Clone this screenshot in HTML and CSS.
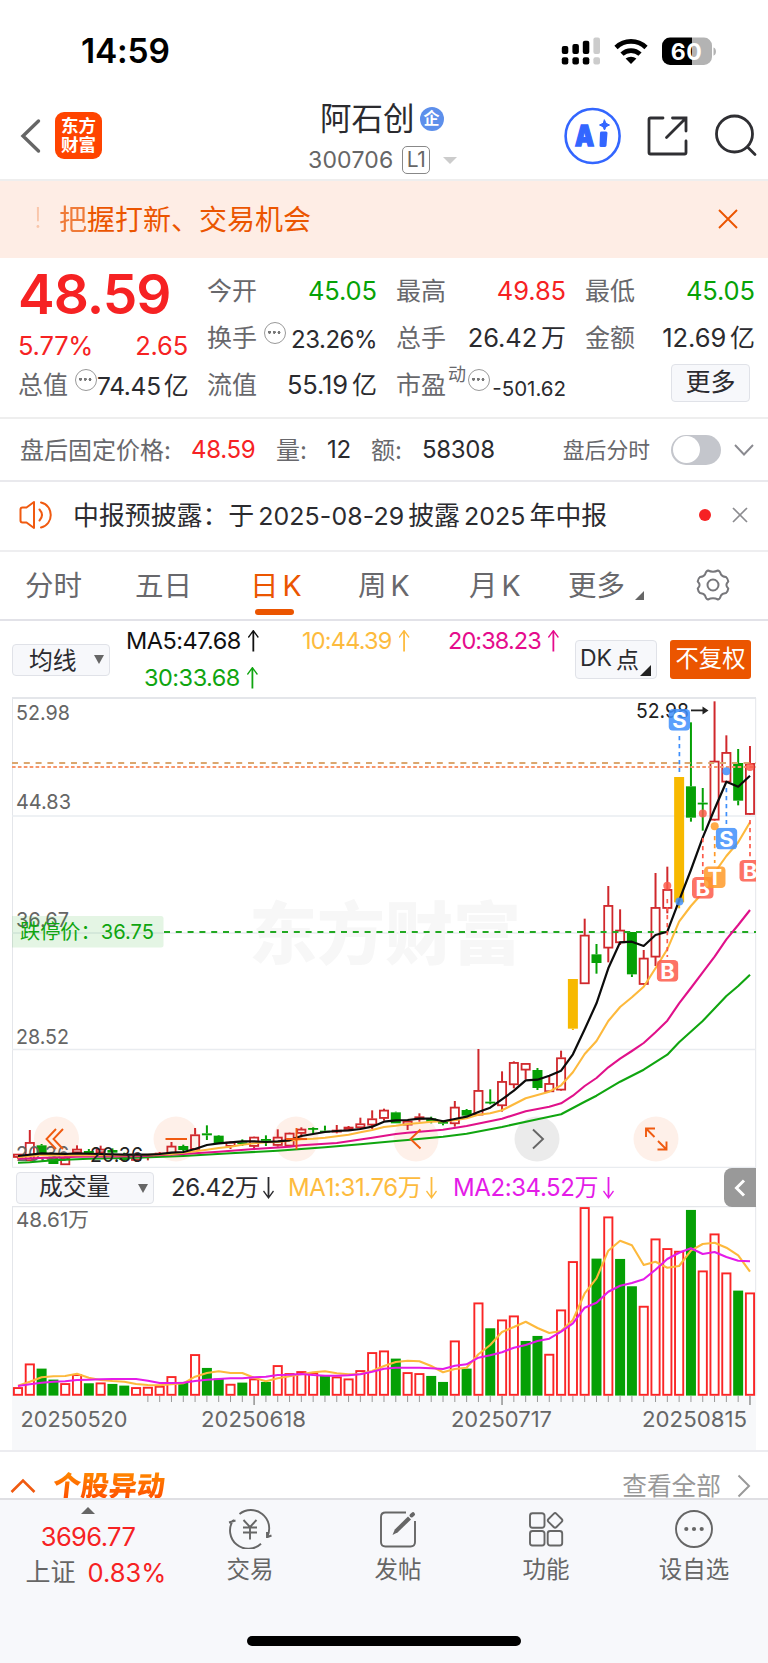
FILE: index.html
```html
<!DOCTYPE html>
<html lang="zh-CN">
<head>
<meta charset="utf-8">
<title>阿石创 300706</title>
<link rel="stylesheet" href="styles.css">
</head>
<body>
<header class="status">
  <span class="clock">14:59</span>
  <svg class="status-icons" width="156" height="30" viewBox="561 37 156 30">
    <g fill="#000">
      <rect x="561.8" y="46" width="6.5" height="8" rx="2"/><rect x="572.4" y="44" width="6.5" height="10" rx="2"/><rect x="582.8" y="40.7" width="6.5" height="13.3" rx="2"/>
      <rect x="561.8" y="57.3" width="6.5" height="7.3" rx="2"/><rect x="572.4" y="57.3" width="6.5" height="7.3" rx="2"/><rect x="582.8" y="57.3" width="6.5" height="7.3" rx="2"/>
    </g>
    <g fill="#ccc"><rect x="593.4" y="37.6" width="6.6" height="16.4" rx="2"/><rect x="593.4" y="57.3" width="6.6" height="7.3" rx="2"/></g>
    <g fill="none" stroke="#000" stroke-width="4.6"><path d="M616 47.5a21.5 21.5 0 0 1 30 0"/><path d="M622 54.2a13 13 0 0 1 18 0"/></g>
    <path d="M625.6 58.6a8.4 8.4 0 0 1 10.8 0L631 64z"/>
    <path d="M692 37.6h-22a8 8 0 0 0-8 8v11.3a8 8 0 0 0 8 8h22z"/>
    <path fill="#b3b3b3" d="M692 37.6h12a8 8 0 0 1 8 8v11.3a8 8 0 0 1-8 8h-12zM713.5 47.5c3.3 1 3.3 7.200 0 8.200z"/>
    <text class="batt" x="686.300" y="59.800" text-anchor="middle" textLength="31">60</text>
  </svg>
</header>

<nav class="titlebar">
  <svg class="back" width="22" height="36" viewBox="0 0 22 36"><path d="M19.500 3L4 18l15.500 15" fill="none" stroke="#666" stroke-width="3.400" stroke-linecap="round"/></svg>
  <div class="logo"><span>东方</span><span>财富</span></div>
  <div class="stock">
    <div class="stock-name">阿石创<span class="ent">企</span></div>
    <div class="stock-code"><span>300706</span><span class="level">L1</span><i class="tri-down"></i></div>
  </div>
  <svg class="nav-icons" width="206" height="60" viewBox="562 106 206 60" fill="none" stroke="#2f2f33" stroke-width="2.800" stroke-linecap="round">
    <circle cx="592.600" cy="136" r="27" stroke="#3366ff" stroke-width="2.600"/>
    <text class="ai" x="575" y="146" textLength="19" lengthAdjust="spacingAndGlyphs">A</text>
    <path d="M601.500 133h4.500l-1 12.500h-4z" fill="#3366ff" stroke="#3366ff" stroke-width="3" stroke-linejoin="round"/>
    <path d="M604.500 120l1.500 3.300 3.500 1.700-3.500 1.700-1.500 3.300-1.500-3.300-3.500-1.700 3.500-1.700z" fill="#3366ff" stroke="#3366ff" stroke-width="1"/>
    <path d="M663 118h-12.500q-1.500 0-1.500 1.500v33q0 1.500 1.500 1.500h34q1.500 0 1.500-1.500V141M672.500 118H686v13M685.500 118.500L666.500 137.500"/>
    <circle cx="734.500" cy="134" r="18"/><path d="M747.500 147l7.500 7.500"/>
  </svg>
</nav>

<section class="banner">
  <span class="bang">!</span><span class="banner-text"><em>把</em>握打新、交易机会</span>
  <svg width="22" height="22" viewBox="0 0 22 22"><path d="M2 2l18 18M20 2L2 20" stroke="#eb5500" stroke-width="1.900"/></svg>
</section>

<section class="quote">
  <div class="col">
    <div class="price">48.59</div>
    <div class="pct"><span>5.77%</span><span>2.65</span></div>
    <div class="cell low"><label>总值</label><i class="dots"></i><b class="s24">74.45<u>亿</u></b></div>
  </div>
  <div class="col">
    <div class="cell"><label>今开</label><b class="green">45.05</b></div>
    <div class="cell"><label>换手</label><i class="dots"></i><b class="s235">23.26%</b></div>
    <div class="cell"><label>流值</label><b>55.19<u>亿</u></b></div>
  </div>
  <div class="col">
    <div class="cell"><label>最高</label><b class="red">49.85</b></div>
    <div class="cell"><label>总手</label><b>26.42<u>万</u></b></div>
    <div class="cell"><label>市盈</label><sup>动</sup><i class="dots"></i><b class="s20">-501.62</b></div>
  </div>
  <div class="col">
    <div class="cell"><label>最低</label><b class="green">45.05</b></div>
    <div class="cell"><label>金额</label><b>12.69<u>亿</u></b></div>
    <div class="cell end"><button class="more">更多</button></div>
  </div>
</section>

<section class="after">
  <span class="w173">盘后固定价格:</span><b class="red w85">48.59</b><span class="w51">量:</span><b class="w44">12</b><span class="w51b">额:</span><b>58308</b>
  <span class="after-time">盘后分时</span><i class="toggle"></i>
  <svg width="20" height="12" viewBox="0 0 20 12"><path d="M1 1l9 9.500L19 1" fill="none" stroke="#8a8a90" stroke-width="1.900"/></svg>
</section>

<section class="notice">
  <svg width="34" height="30" viewBox="0 0 34 30" fill="none" stroke="#f05a10" stroke-width="2" stroke-linejoin="round" stroke-linecap="round"><path d="M15 2L7.500 7.500H3.500Q1.500 7.500 1.500 9.500v11q0 2 2 2h4L15 28z"/><path d="M20.500 9.500q5 5.500 0 11M22 2.500c13 3 13 22 0 25"/></svg>
  <p>中报预披露：于<b>2025-08-29</b>披露<b>2025</b>年中报</p>
  <i class="reddot"></i>
  <svg width="16" height="16" viewBox="0 0 16 16"><path d="M1 1l14 14M15 1L1 15" stroke="#8c8c90" stroke-width="1.700"/></svg>
</section>

<nav class="tabs">
  <span class="t1">分时</span><span class="t2">五日</span><span class="t3 on">日<b>K</b></span><span class="t4">周<b>K</b></span><span class="t5">月<b>K</b></span><span class="t6">更多<i class="corner"></i></span>
  <svg width="34" height="34" viewBox="-17 -17 34 34" fill="none" stroke="#77777b" stroke-width="2" stroke-linejoin="round"><path d="M-5-14.500Q0-12 5-14.500 7-14 8-10.500 9-8.500 13-8 14.800-6.500 15.300-3.500 11.500 0 15.300 3.500 14.800 6.500 13 8 9 8.500 8 10.500 7 14 5 14.500 0 12-5 14.500-7 14-8 10.500-9 8.500-13 8-14.800 6.500-15.300 3.500-11.500 0-15.300-3.500-14.800-6.500-13-8-9-8.500-8-10.500-7-14-5-14.500z"/><circle r="5.500"/></svg>
</nav>

<section class="ma">
  <div class="picker"><span>均线</span><i class="tri"></i></div>
  <div class="ma-values">
    <div class="ma-line"><span class="m5">MA5:47.68<i class="up"></i></span><span class="m10">10:44.39<i class="up"></i></span><span class="m20">20:38.23<i class="up"></i></span></div>
    <div class="ma-line second"><span class="m30">30:33.68<i class="up"></i></span></div>
  </div>
  <div class="dk"><span>DK</span><span>点</span><i class="corner"></i></div>
  <div class="fq">不复权</div>
</section>

<svg id="kline" width="768" height="471" viewBox="0 697 768 471"></svg>

<section class="volhead">
  <div class="picker wide"><span>成交量</span><i class="tri"></i></div>
  <span class="v0">26.42万<i class="down"></i></span>
  <span class="v1">MA1:31.76万<i class="down"></i></span>
  <span class="v2">MA2:34.52万<i class="down"></i></span>
  <div class="collapse"><svg width="12" height="18" viewBox="0 0 12 18"><path d="M10 1.500L2.500 9l7.500 7.500" fill="none" stroke="#fff" stroke-width="3"/></svg></div>
</section>

<svg id="volume" width="768" height="244" viewBox="0 1206 768 244"></svg>

<section class="moves">
  <svg width="26" height="16" viewBox="0 0 26 16"><path d="M1.500 14L13 2.500 24.500 14" fill="none" stroke="#f05a10" stroke-width="2.600"/></svg>
  <h2>个股异动</h2>
  <span>查看全部</span>
  <svg width="14" height="24" viewBox="0 0 14 24"><path d="M1.500 1.500L12 12 1.500 22.500" fill="none" stroke="#999" stroke-width="2"/></svg>
</section>

<footer class="bottom">
  <div class="index"><i class="tri-up"></i><div class="red idx">3696.77</div><div class="idx2"><span>上证</span><b class="red">0.83%</b></div></div>
  <div class="item"><svg width="44" height="40" viewBox="-22 -20 44 40" fill="none" stroke="#666" stroke-width="1.900"><path d="M-10.500-15A18.300 18.300 0 0 1 17.500 7M11 14.700A18.300 18.300 0 0 1-17-8.500M-21-6.500l6.500-2M-17-8.500l1-.500M17.500 8l4-1.500M17 3v6"/><path d="M-6.500-9L0-2l6.500-7M0-2V10.500M-7-1.500H7M-7 3.500H7"/></svg><span>交易</span></div>
  <div class="item"><svg width="44" height="40" viewBox="-22 -20 44 40" fill="none" stroke="#666" stroke-width="1.900"><path d="M8-16.500H-12.500Q-17-16.500-17-12V13Q-17 17.500-12.500 17.500H12.500Q17 17.500 17 13V-8"/><path d="M-5.500 6l2.300-5.500L10-12.500l3 3L-.200 3.200z" fill="#666" stroke="none"/><path d="M13.500-13.500l1.500-1.300" stroke-width="4" stroke-linecap="round"/></svg><span>发帖</span></div>
  <div class="item"><svg width="44" height="40" viewBox="-22 -20 44 40" fill="none" stroke="#666" stroke-width="1.900"><rect x="-16" y="-15.700" width="14.500" height="14.500" rx="2.500"/><rect x="-16" y="2" width="14.500" height="14.500" rx="2.500"/><rect x="1.700" y="2" width="14.500" height="14.500" rx="2.500"/><rect x="3.400" y="-14.300" width="11.300" height="11.300" rx="2" transform="rotate(45 9 -8.600)"/></svg><span>功能</span></div>
  <div class="item"><svg width="44" height="40" viewBox="-22 -20 44 40" fill="none" stroke="#666" stroke-width="1.900"><circle r="18"/><g fill="#666" stroke="none"><circle cx="-7.700" r="2.100"/><circle r="2.100"/><circle cx="7.700" r="2.100"/></g></svg><span>设自选</span></div>
  <i class="home"></i>
</footer>
<script src="chart.js"></script>
</body>
</html>
```
FILE: styles.css
```css
* { box-sizing: border-box; }
body { margin: 0; width: 768px; background: #fff; color: #2b2b2f; font-family: Inter, "Noto Sans CJK SC", sans-serif; overflow: hidden; }
b, i, em, u { font-weight: 400; font-style: normal; text-decoration: none; }
svg { display: block; flex: none; }
span, b, p, h2, label, div { white-space: nowrap; }
.red { color: #f62223; }
.green { color: #06a206; }

.status { height: 91px; display: flex; justify-content: space-between; padding: 37px 51px 0 81px; }
.clock { font-size: 33.5px; font-weight: 600; line-height: 29px; letter-spacing: -0.2px; color: #000; }
.batt { font-size: 23px; font-weight: 700; fill: #fff; }

.titlebar { height: 90px; border-bottom: 2px solid #eee; display: flex; align-items: flex-start; padding-left: 19px; }
.back { margin-top: 27px; }
.logo { width: 47px; height: 47px; margin: 21px 0 0 14px; padding-top: 4px; border-radius: 9px; background: #ff4400; color: #fff; font-size: 17.5px; font-weight: 700; line-height: 19px; display: flex; flex-direction: column; align-items: center; }
.stock { width: 280px; margin-left: 206px; padding-top: 10px; }
.stock-name { height: 36px; line-height: 36px; padding-left: 12px; font-size: 31.5px; display: flex; align-items: center; }
.ent { width: 24px; height: 24px; margin-left: 5px; border-radius: 50%; background: #5d8feb; color: #fff; font-size: 16px; font-weight: 700; line-height: 22px; text-align: center; }
.stock-code { display: flex; align-items: center; height: 28px; margin-top: 9px; color: #666; font-size: 23px; }
.stock-code span:first-child { width: 94px; letter-spacing: 0.2px; }
.level { width: 28px; height: 28px; border: 1.5px solid #888; border-radius: 5px; font-size: 21px; line-height: 26px; text-align: center; letter-spacing: -0.5px; }
.tri-down { margin-left: 13px; border: 7px solid transparent; border-top: 7px solid #ccc; border-bottom: 0; }
.nav-icons { margin: 15px 0 0 -26px; }
.ai { font: 900 29px Inter, sans-serif; fill: #3366ff; stroke: #3366ff; stroke-width: 1.5px; }

.banner { height: 77px; background: #feede5; color: #eb5500; display: flex; align-items: center; padding: 0 29px 4px 34px; font-size: 28px; }
.banner svg { margin-top: 2px; }
.bang { width: 25px; opacity: .25; font-weight: 300; }
.banner-text { flex: 1; }
.banner em { opacity: .75; }

.quote { height: 161px; border-bottom: 2px solid #eee; display: grid; grid-template-columns: repeat(4, 170px); column-gap: 19px; padding: 9px 0 0 18px; }
.col { min-width: 0; }
.price { height: 54px; line-height: 54px; font-size: 55px; font-weight: 600; color: #f62223; letter-spacing: -1px; }
.pct { height: 49px; line-height: 49px; display: flex; justify-content: space-between; font-size: 25.5px; color: #f62223; letter-spacing: -0.2px; }
.cell { height: 47px; display: flex; align-items: center; font-size: 25px; }
.cell.low { height: 30px; }
.cell label { color: #68686c; margin-top: -4px; }
.cell b { margin-left: auto; font-size: 25.5px; letter-spacing: -0.1px; }
.cell u { margin-left: 4px; font-size: 25px; line-height: 1; }
.cell .s24 { font-size: 24.5px; padding-top: 2px; letter-spacing: -0.3px; }
.cell .s24 u { margin-left: 3px; }
.cell .s235 { font-size: 24px; padding-top: 3px; letter-spacing: -0.5px; }
.cell .s20 { font-size: 20.5px; padding-top: 8px; letter-spacing: 0; }
.cell sup { font-size: 18px; line-height: 18px; margin: -20px 0 0 2px; color: #68686c; }
.dots { width: 22px; height: 22px; margin: -10px 0 0 7px; border: 1.7px solid #999; border-radius: 50%; background: radial-gradient(circle at 4.5px 9.3px, #777 1.3px, transparent 1.7px), radial-gradient(circle at 9.3px 9.3px, #777 1.3px, transparent 1.7px), radial-gradient(circle at 14px 9.3px, #777 1.3px, transparent 1.7px); flex: none; }
sup + .dots { margin-left: 2px; margin-top: -10px; }
.cell.end { justify-content: flex-end; padding: 0 5px 4px 0; }
.more { width: 79px; height: 38px; border: 1.5px solid #e0e2e8; border-radius: 4px; background: #f7f8fb; color: #2b2b2f; font: 25px/32px Inter, "Noto Sans CJK SC", sans-serif; padding: 0 0 2px; }

.after { height: 63px; border-bottom: 2px solid #e9e9ed; display: flex; align-items: center; padding: 0 14px 0 20px; font-size: 24px; }
.after span { color: #68686c; margin-top: -2px; }
.after b { letter-spacing: -0.3px; }
.w173 { width: 171px; }
.w85 { width: 85px; }
.w51, .w51b { width: 51px; }
.w44 { width: 44px; }
.after .after-time { margin-left: auto; font-size: 21.8px; }
.toggle { width: 50px; height: 30px; margin: 0 13px 0 21px; border-radius: 15px; background: #c4c6cc; display: flex; align-items: center; padding-left: 1.500px; }
.toggle::before { content: ""; width: 27px; height: 27px; border-radius: 50%; background: #fff; }

.notice { height: 70px; border-bottom: 2px solid #eeeef0; display: flex; align-items: center; padding: 0 20px 2px 19px; }
.notice p { margin: -4px auto 0 20px; font-size: 25.900px; }
.notice p b { margin: 0 4px; letter-spacing: 0.1px; font-size: 24.900px; }
.reddot { width: 12px; height: 12px; border-radius: 50%; background: #f62223; margin-right: 21px; }

.tabs { height: 69px; border-bottom: 2px solid #e2e2e8; display: flex; align-items: center; padding: 0 0 1px 25px; font-size: 28.500px; color: #68686c; }
.tabs span { padding-bottom: 4px; }
.tabs b { margin-left: 4px; }
.t1 { width: 110px; } .t2 { width: 115px; } .t3 { width: 108px; } .t4 { width: 111px; } .t5 { width: 99px; } .t6 { width: 128px; display: flex; align-items: flex-end; }
.tabs .on { color: #eb5500; position: relative; }
.on::after { content: ""; position: absolute; left: 5px; bottom: -7px; width: 39px; height: 6px; border-radius: 3px; background: #eb5500; }
.corner { width: 0; height: 0; border-left: 9px solid transparent; border-bottom: 9px solid #666; margin: 0 0 4px 10px; }

.ma { height: 76px; display: flex; padding-left: 12px; }
.picker { width: 98px; height: 32px; margin-top: 22.500px; border: 1.500px solid #e0e2e8; border-radius: 4px; background: #f7f8fb; display: flex; align-items: center; justify-content: space-between; padding: 0 5px 0 16px; font-size: 23.800px; }
.picker span { margin-top: -3px; }
.tri { border: 5px solid transparent; border-top: 9px solid #666; border-bottom: 0; }
.ma-values { width: 465px; padding-top: 1px; }
.ma-line { height: 37px; display: flex; align-items: center; padding-left: 16px; font-size: 23.500px; letter-spacing: -0.5px; }
.second { padding-left: 34px; }
.ma-line span { display: flex; align-items: center; }
.m5 { color: #111; width: 176px; } .m10 { color: #fdbb3e; width: 146px; letter-spacing: -0.8px; } .m20 { color: #e50c8c; letter-spacing: -0.9px; } .m30 { color: #10a510; }
.up, .down { width: 11px; height: 22px; margin-left: 7px; background: currentColor; clip-path: polygon(4.600px 3.500px, 1px 8.500px, 0 7.500px, 5.500px 0, 11px 7.500px, 10px 8.500px, 6.400px 3.500px, 6.400px 22px, 4.600px 22px); flex: none; }
.down { transform: rotate(180deg); }
.dk { width: 82px; height: 39px; margin-top: 18.500px; border: 1.500px solid #e0e2e8; border-radius: 4px; background: #f7f8fb; font-size: 23px; display: flex; align-items: center; padding-left: 4px; }
.dk span { margin: -2px 4px 0 0; }
.dk .corner { border-left-width: 11px; border-bottom: 11px solid #222; margin: 23px 0 0 -3px; }
.fq { width: 81px; height: 39px; margin: 18.500px 0 0 13px; border-radius: 3px; background: #eb5500; color: #fff; font-size: 23.300px; line-height: 37px; text-align: center; }

.volhead { height: 38px; display: flex; align-items: flex-start; padding-left: 16px; font-size: 24px; line-height: 38px; }
.wide { width: 138px; margin-top: 4px; padding: 0 5px 0 22px; }
.volhead span { display: flex; align-items: center; }
.volhead > span { margin-top: 1px; letter-spacing: -0.400px; }
.v0 { margin-left: 17px; width: 117px; } .v1 { color: #fdbb3e; width: 165px; } .v2 { color: #e41be8; }
.v0 .down { margin-left: 5px; } .v1 .down, .v2 .down { margin-left: 5px; }
.collapse { width: 32px; height: 39px; margin-left: auto; margin-right: 12px; border-radius: 8px 0 0 8px; background: #999; display: flex; align-items: center; justify-content: center; position: relative; }

.moves { height: 48px; border-top: 2px solid #ececf0; display: flex; align-items: center; padding: 22px 17px 0 10px; }
.moves h2 { margin: 0 auto 0 17px; font-size: 28px; line-height: 30px; font-weight: 900; transform: skewX(-6deg); background: linear-gradient(#ff8a00, #ff4a00); -webkit-background-clip: text; color: transparent; }
.moves span { font-size: 24.700px; line-height: 30px; color: #999; margin-right: 16px; }

.bottom { height: 166px; background: #f7f8fb; border-top: 2px solid #dfdfe3; display: grid; grid-template-columns: 176px 148px 148px 148px 148px; position: relative; color: #666; }
.index { display: flex; flex-direction: column; align-items: center; }
.tri-up { margin-top: 7px; border: 7px solid transparent; border-bottom: 7px solid #666; border-top: 0; }
.idx { margin-top: 6px; font-size: 25.500px; line-height: 34px; letter-spacing: -0.600px; }
.idx2 { display: flex; gap: 12px; align-items: center; margin: 1px 0 0 16px; font-size: 25px; line-height: 36px; }
.idx2 span { margin-top: -2px; }
.idx2 b { font-size: 25.500px; }
.item { display: flex; flex-direction: column; align-items: center; padding-top: 9px; font-size: 23.500px; }
.item span { line-height: 34px; margin-top: 4px; }
.home { position: absolute; left: 247px; top: 136px; width: 274px; height: 10px; border-radius: 5px; background: #000; }

svg text { font-family: Inter, "Noto Sans CJK SC", sans-serif; }
.axis { font-size: 20.500px; fill: #666; }
.mark { font-weight: 700; font-size: 22px; fill: #fff; }
.wm { font-weight: 900; font-size: 68px; fill: #f7f7f7; }
```
FILE: chart.js
```js
const NS = 'http://www.w3.org/2000/svg';
const xAt = i => 18 + i * 11.806;
function add(parent, tag, attrs, text) {
  const e = document.createElementNS(NS, tag);
  for (const k in attrs) e.setAttribute(k, attrs[k]);
  if (text) e.textContent = text;
  parent.appendChild(e);
  return e;
}
const line = (p, x1, y1, x2, y2, stroke, w, dash) =>
  add(p, 'path', { d: `M${x1} ${y1}L${x2} ${y2}`, stroke, 'stroke-width': w, fill: 'none', ...(dash ? { 'stroke-dasharray': dash } : {}) });
const label = (p, x, y, w, t, extra) =>
  add(p, 'text', { x: x - 1, y, textLength: w + 1, lengthAdjust: 'spacingAndGlyphs', class: 'axis', ...extra }, t);

const k = document.getElementById('kline');
line(k, 12, 698, 756, 698, '#e4e6ea', 1.8);
line(k, 12.5, 698, 12.5, 1168, '#e4e6ea', 1);
line(k, 755.7, 698, 755.7, 1168, '#e4e6ea', 1);
[816, 933, 1049.5, 1167.5].forEach(y => line(k, 12, y, 756, y, '#e9ecf0', 1.5));
add(k, 'text', { x: 249, y: 959, textLength: 272, class: 'wm' }, '东方财富');
[56.5, 176, 296, 416, 537, 656].forEach((x, i) =>
  add(k, 'circle', { cx: x, cy: 1139, r: 22.5, fill: i === 4 ? '#ebebeb' : '#fef0e9' }));

// Candles: scale segments map [high, top, bottom, low] thirds onto the panel.
const segA = [
  'r 222 222 232 236', 'r 150 187 242 243', 'g 192 196 222 225', 'g 225 230 252 252', 'r 225 235 254 254',
  'r 196 207 218 222', 'g 207 213 221 225', 'r 197 207 218 225', 'g 205 210 218 222', 'g 218 224 240 242',
  'r 218 226 241 245', 'r 222 226 232 241', 'r 216 219 227 230', 'r 186 198 222 226', 'g 194 198 210 214',
  'r 144 164 208 210', 'g 136 160 166 180', 'g 165 167 192 192', 'r 184 186 199 207', 'g 178 187 190 198',
  'r 170 171 199 208', 'g 166 177 181 198', 'r 148 171 196 200', 'r 158 159 198 200', 'r 142 147 160 172',
  'g 142 144 146 160', 'g 137 152 155 158', 'r 135 150 156 160', 'r 138 141 148 150', 'r 113 131 143 147',
  'r 91 116 135 147', 'r 86 90 115 122', 'g 95 97 130 130'];
const segB = [
  'r 540 543 555 570', 'r 520 530 537 545', 'g 530 535 545 550', 'g 540 545 551 556', 'r 483 501 551 560',
  'g 507 510 527 530', 'r 327 451 525 527', 'g 448 485 489 493', 'r 394 424 497 515', 'r 364 367 434 445',
  'r 369 370 390 418', 'g 384 390 444 450', 'r 407 430 455 456', 'r 332 353 450 452', 'y 117 117 266 270',
  'r -64 -15 131 131', 'g 12 43 69 101', 'r -162 -104 24 67', 'r -92 -30 8 15', 'g -24 -24 103 111',
  'r 30 54 133 135', 'r -201 -98 51 78'];
const segC = [
  'r 530 598 655 670', 'y 261 261 637 655', 'g 97 289 383 395', 'g 294 338 341 422', 'r 34 213 390 392',
  'r 136 187 276 276', 'g 177 219 332 346', 'r 168 220 373 375'];
const COL = { r: '#d0282c', g: '#05a005', y: '#f7b900' };
let idx = 0;
for (const [seg, base] of [[segA, 1080], [segB, 940], [segC, 690]]) {
  for (const s of seg) {
    const [c, ...v] = s.split(' ');
    const [h, t, b, l] = v.map(n => base + n / 3);
    const x = xAt(idx++), col = COL[c];
    if (h < t) line(k, x, h, x, t, col, 2);
    if (l > b) line(k, x, b, x, l, col, 2);
    if (c === 'r') add(k, 'rect', { x: x - 4.1, y: t + .6, width: 8.2, height: Math.max(b - t - 1, .8), fill: 'none', stroke: col, 'stroke-width': 1.8 });
    else add(k, 'rect', { x: x - 5, y: t, width: 10, height: Math.max(b - t, 1.8), fill: col });
  }
}

// Limit-down and reference price lines.
label(k, 17, 927, 52, '36.67');
label(k, 17, 1161, 52, '20.36');
add(k, 'path', { d: 'M12 916H161q2.500 0 2.500 2.500V945q0 2.500-2.500 2.500H12z', fill: '#05a005', 'fill-opacity': .11 });
label(k, 21, 939, 133, '跌停价：36.75', { style: 'fill:#10a510' });
line(k, 164, 932, 756, 932, '#22a822', 2.2, '6 5.8');
line(k, 12, 763, 756, 763, '#dba76f', 2.2, '6 5.8');
line(k, 12, 767, 756, 767, '#f6966b', 2.2, '3.6 2.3');

// Moving averages as index:value pairs on each scale segment.
function curve(svg, color, parts, w = 2.1) {
  const d = parts.flatMap(([base, s]) => s.split(' ').map(p => {
    const [i, v] = p.split(':').map(Number);
    return `${xAt(i).toFixed(1)} ${(base + v / 3).toFixed(1)}`;
  }));
  add(svg, 'path', { d: 'M' + d.join('L'), fill: 'none', stroke: color, 'stroke-width': w, 'stroke-linejoin': 'round' });
}
curve(k, '#10a510', [[1080, '0:248 1:247 3:241 6:236 10:233 14:228 18:220 22:212 26:202 29:193 32:183'],
  [940, '33:600 36:590 38:581 41:561 44:538 46:523 48:485 49:467 50:446 51:425 53:389 55:344 56:307 58:243 60:168 61:138 62:104']]);
curve(k, '#e0118a', [[1080, '0:236 5:230 10:229 14:222 17:215 20:207 23:200 24:196 27:189 30:173 32:162'],
  [940, '33:578 36:569 38:558 41:536 43:514 45:500 46:490 47:467 48:438 49:414 50:382 51:356 52:333 53:309 54:277 55:242 56:190 57:144 58:97 59:50 60:-2'],
  [690, '61:705 62:660']]);
curve(k, '#fdb93c', [[1080, '0:232 2:225 5:226 10:226 13:222 14:218 15:214 16:209 17:204 18:200 19:194 20:190 21:187 22:186 23:182 24:178 25:176 26:173 27:169 28:164 29:157 30:150 31:141 32:137'],
  [940, '33:552 34:549 35:545 36:544 37:541 38:535 39:524 40:520 41:511 42:493 43:475 44:465 45:455 46:436 47:397 48:342 49:303 50:243 51:201 52:172 53:140 54:85'],
  [690, '55:778 56:695 57:648 58:608 59:548 60:498 61:457 62:397']]);
curve(k, '#0c0c0c', [[1080, '0:228 2:220 4:222 5:220 7:222 9:224 11:224 12:222 13:218 14:216 15:207 16:195 17:190 18:187 19:184 20:184 21:186 22:184 23:181 24:168 25:162 26:156 27:153 28:151 29:147 30:140 31:125 32:121'],
  [940, '33:540 34:536 35:536 36:544 37:537 38:530 39:516 40:503 41:478 42:452 43:421 44:419 45:407 46:392 47:343 48:268 49:190 50:85 51:7'],
  [690, '52:755 53:768 54:735 55:725 56:632 57:540 58:443 59:357 60:275 61:290 62:257']], 2.2);

label(k, 17, 720, 53, '52.98');
label(k, 17, 809, 54, '44.83');
label(k, 17, 1044, 52, '28.52');
label(k, 91, 1162, 52, '20.36', { style: 'fill:#222' });
label(k, 637, 717.5, 52, '52.98', { style: 'fill:#222' });
line(k, 691, 710.4, 703, 710.4, '#222', 1.8);
add(k, 'path', { d: 'M702.500 706.500L708.500 710.400 702.500 714.500z', fill: '#222' });

// Trade markers: letter, box x/y, dash from/to, dot y, centre x.
const R = '#fd5b4a', BL = '#3f8ffb', O = '#ff9a28';
[['B', 656.7, 960, 899, 957, 885.7, 667.3, R], ['S', 668.5, 709, 736, 772, 901.5, 679.4, BL],
 ['B', 692, 877, 838, 874, 813.5, 702.8, R], ['T', 704, 866.3, 836, 863, 826.2, 714.7, O],
 ['S', 715.7, 827.8, 788, 824, 771.2, 726.4, BL], ['B', 739.3, 860, 820, 857, 767, 750, R]].forEach(([t, x, y, a, b, dot, cx, c]) => {
  line(k, cx, a, cx, b, c, 1.7, '4.2 3.8');
  add(k, 'circle', { cx, cy: dot, r: 4, fill: c, 'fill-opacity': .85 });
  const g = add(k, 'svg', { x, y, width: Math.min(21.7, 756 - x), height: 21.7 });
  add(g, 'rect', { width: 21.7, height: 21.7, rx: 4.5, fill: c, 'fill-opacity': .85 });
  add(g, 'text', { x: 10.85, y: 18.8, 'text-anchor': 'middle', class: 'mark' }, t);
});

const icon = (d, c) => add(k, 'path', { d, stroke: c, 'stroke-width': 1.9, fill: 'none' });
icon('M56 1129L46.500 1139L56 1149M63 1129L53.500 1139L63 1149M165.500 1139H187M286 1139H307M296.500 1128V1149.500M420.500 1129.500L410.500 1139L420.500 1148.500', '#f05a10');
icon('M533 1129.500L543 1139L533 1148.500', '#666');
icon('M646 1137V1128.500H655M646.500 1129L654.500 1137M666.500 1141.500V1149.500H657.500M666 1149L658 1141', '#f05a10');

// Volume panel
const v = document.getElementById('volume');
add(v, 'rect', { x: 12, y: 1396, width: 744, height: 55, fill: '#f7f8fa' });
line(v, 12, 1206.6, 756, 1206.6, '#e4e6ea', 1.2);
line(v, 12.5, 1206, 12.5, 1396, '#e4e6ea', 1);
line(v, 755.7, 1206, 755.7, 1396, '#e4e6ea', 1);
const tops = [668, 597, 612, 645, 656, 629, 656, 654, 658, 663, 668, 667, 664, 635, 652, 569, 610, 642, 658, 654, 642, 652, 602, 626, 620, 624, 634, 636, 642, 617, 563, 558, 582,
  623, 626, 634, 652, 528, 612, 414, 491, 465, 453, 529, 514, 568, 435, 290, 128, 282, 156, 283, 365, 424, 222, 251, 259, 136, 318, 207, 324, 378, 384];
const falling = new Set([2, 3, 6, 8, 9, 14, 16, 17, 19, 21, 26, 32, 35, 36, 38, 40, 43, 44, 49, 51, 52, 57, 61]);
tops.forEach((t, i) => {
  const x = xAt(i), y = 1165 + t / 3 - .4;
  if (falling.has(i)) add(v, 'rect', { x: x - 5, y, width: 10, height: 1395.6 - y, fill: '#05a005' });
  else add(v, 'rect', { x: x - 4.1, y: y + .8, width: 8.2, height: 1394.8 - y - .8, fill: '#fff', stroke: '#fa2626', 'stroke-width': 1.9 });
  if (i > 10) {
    const major = [20, 41, 62].includes(i);
    line(v, x, 1396, x, major ? 1405 : 1402, '#999', major ? 1.6 : 1);
  }
});
const pairs = a => a.map((n, i) => `${i}:${n}`).join(' ');
curve(v, '#fdb93c', [[1165, pairs([662, 650, 637, 634, 633, 626, 638, 645, 648, 650, 657, 660, 661, 658, 655, 635, 624, 619, 624, 624, 638, 649, 640, 634, 628, 622, 619, 625, 628, 627, 618, 603, 591, 587, 589, 603, 622, 612, 608, 568, 540, 501, 486, 470, 489, 504, 498, 465, 385, 340, 257, 227, 241, 300, 290, 308, 303, 257, 237, 233, 248, 271, 320])]]);
curve(v, '#e41be8', [[1165, pairs([663, 658, 653, 650, 649, 645, 644, 643, 642, 642, 642, 647, 654, 654, 653, 648, 644, 642, 640, 640, 637, 635, 630, 629, 627, 630, 632, 632, 631, 628, 620, 611, 608, 608, 608, 610, 612, 602, 598, 578, 571, 562, 548, 540, 528, 521, 500, 475, 428, 413, 380, 362, 354, 343, 314, 282, 263, 250, 267, 261, 276, 287, 289])]]);
label(v, 17, 1226.5, 72, '48.61万');
[[21.5, 106, '20250520'], [202, 104, '20250618'], [452, 100, '20250717'], [643, 104, '20250815']].forEach(([x, w, t]) =>
  label(v, x, 1427, w, t, { style: 'font-size:21.5px' }));
```
